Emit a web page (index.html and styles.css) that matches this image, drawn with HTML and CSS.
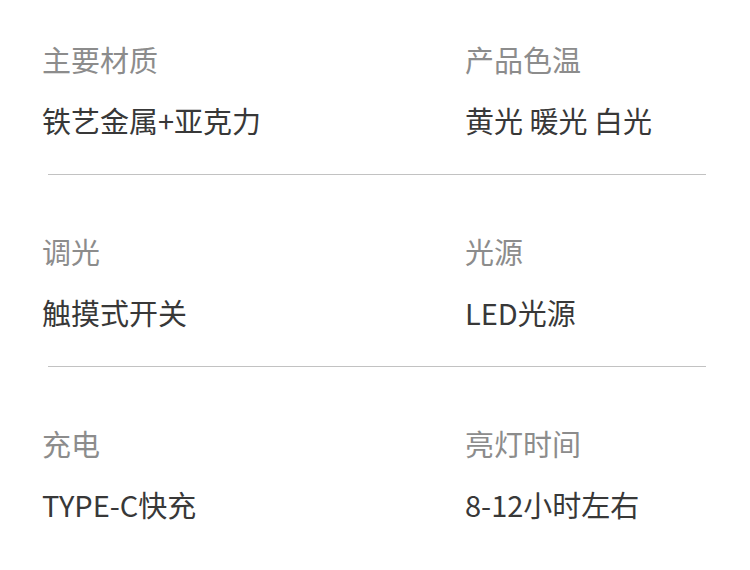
FILE: index.html
```html
<!DOCTYPE html>
<html lang="zh-CN">
<head>
<meta charset="utf-8">
<link rel="stylesheet" href="styles.css">
</head>
<body>
<div class="specs">
  <section class="row">
    <div class="item"><div class="label">主要材质</div><div class="value">铁艺金属+亚克力</div></div>
    <div class="item"><div class="label">产品色温</div><div class="value">黄光 暖光 白光</div></div>
  </section>
  <section class="row">
    <div class="item"><div class="label">调光</div><div class="value">触摸式开关</div></div>
    <div class="item"><div class="label">光源</div><div class="value">LED光源</div></div>
  </section>
  <section class="row last">
    <div class="item"><div class="label">充电</div><div class="value">TYPE-C快充</div></div>
    <div class="item"><div class="label">亮灯时间</div><div class="value">8-12小时左右</div></div>
  </section>
</div>
</body>
</html>
```
FILE: styles.css
```css
html, body {
  margin: 0;
  padding: 0;
  background: #ffffff;
}
body {
  width: 750px;
  height: 570px;
  overflow: hidden;
  font-family: "Noto Sans CJK SC", "Noto Sans", sans-serif;
}
.specs {
  padding: 39px 0 0 0;
}
.row {
  display: grid;
  grid-template-columns: 423px 1fr;
  padding-left: 42px;
  padding-bottom: 34px;
  margin-bottom: 57px;
  position: relative;
}
.row::after {
  content: "";
  position: absolute;
  left: 48px;
  width: 658px;
  bottom: -1px;
  height: 1px;
  background: #c2c2c2;
}
.row.last {
  margin-bottom: 0;
  padding-bottom: 0;
}
.row.last::after {
  display: none;
}
.item {
  display: flex;
  flex-direction: column;
  gap: 21px;
}
.label {
  font-size: 29px;
  line-height: 40px;
  color: #8c8c8c;
  white-space: nowrap;
}
.value {
  font-size: 29px;
  line-height: 40px;
  color: #383838;
  white-space: nowrap;
}
```
